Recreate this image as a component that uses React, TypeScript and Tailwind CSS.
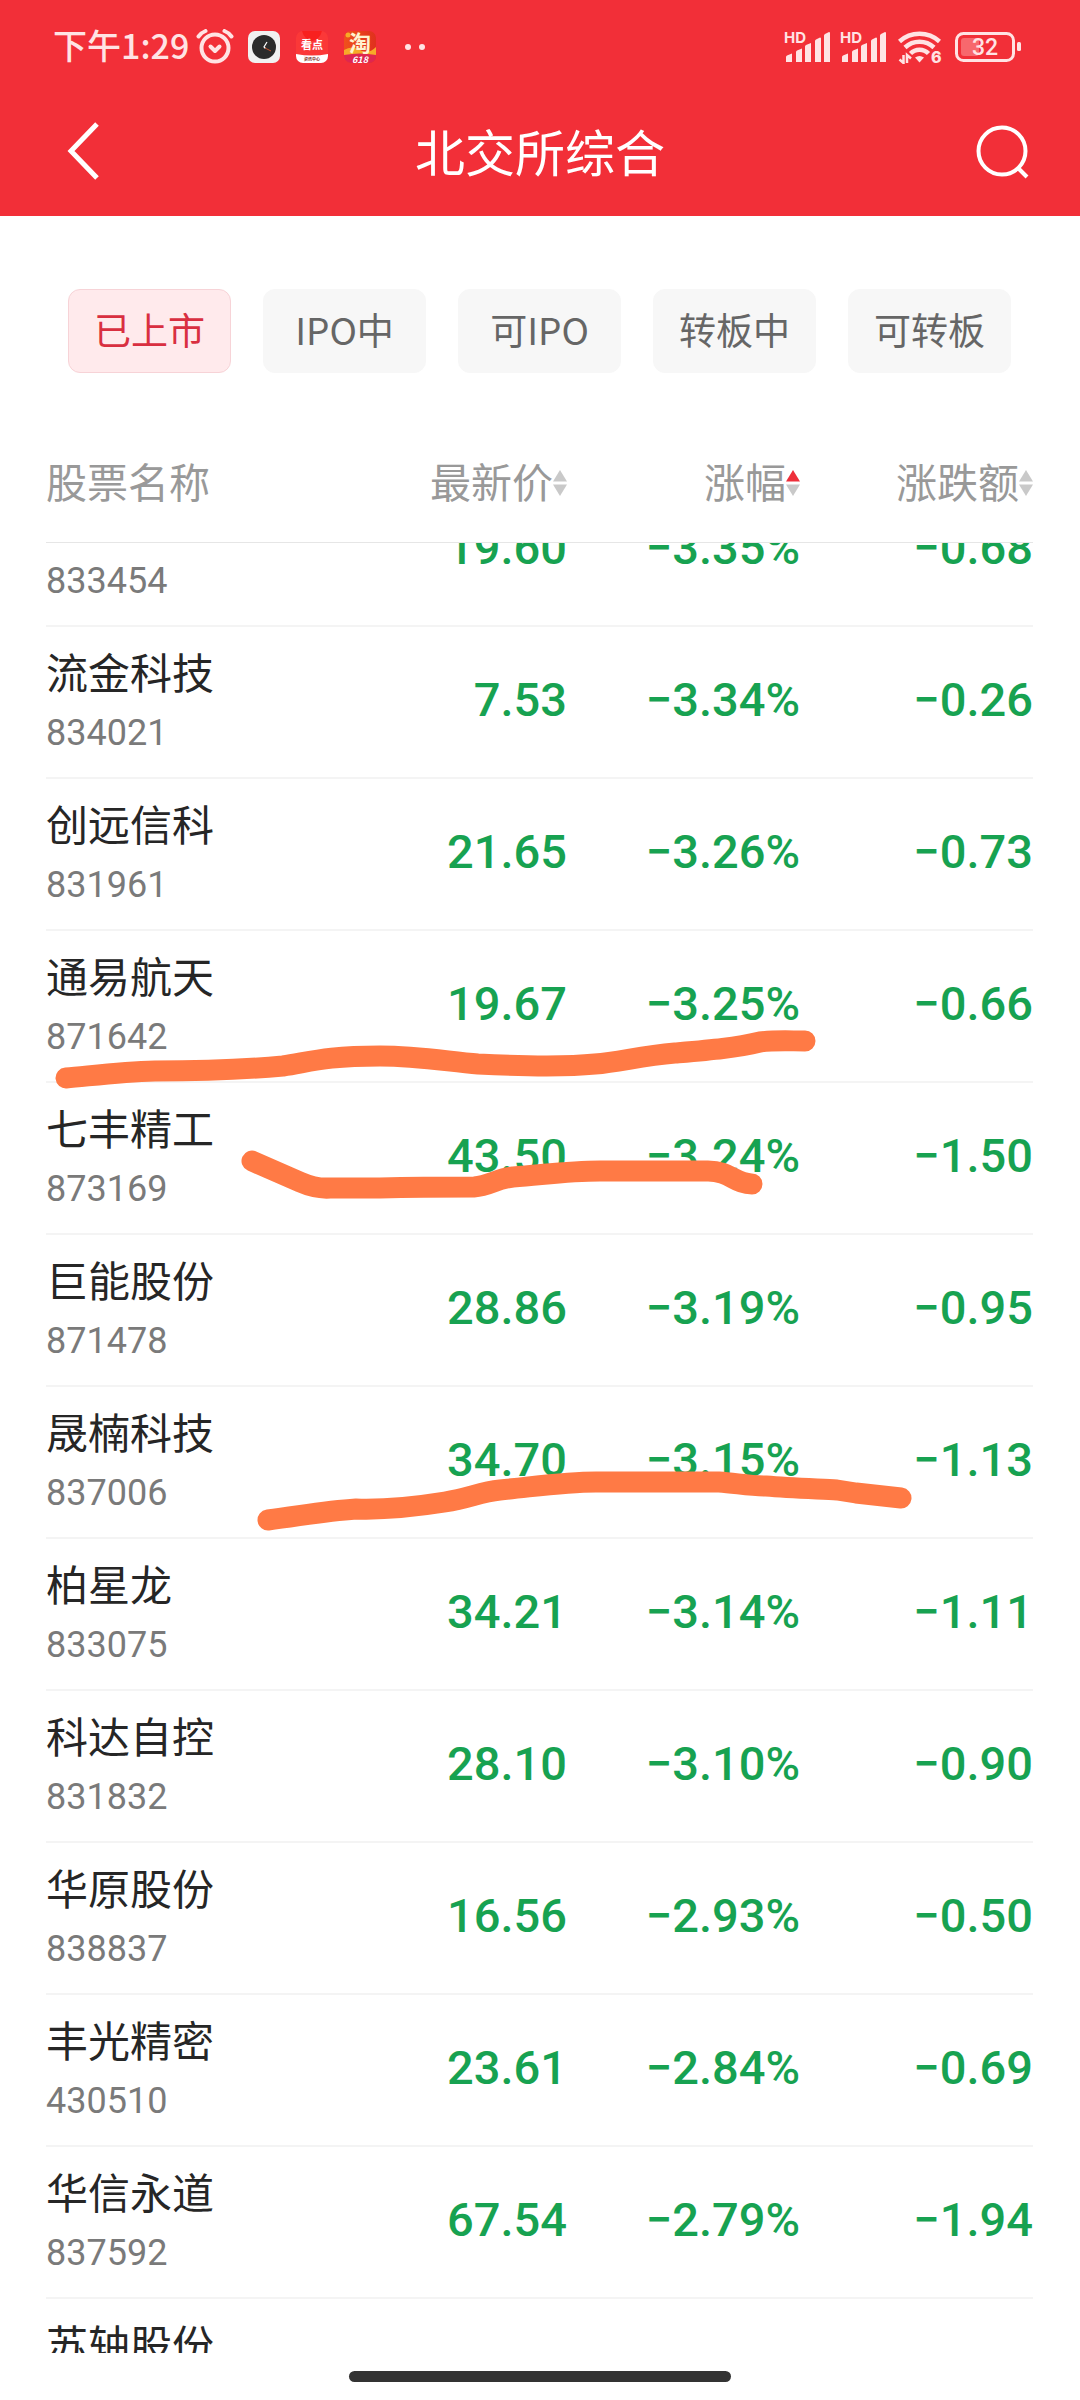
import React, { useLayoutEffect, useRef, useState } from "react";
import clsx from "clsx";

type Stock = {
  name: string;
  code: string;
  price: string;
  percent: string;
  change: string;
};

type SortKey = "price" | "percent" | "change";

const tabs = ["已上市", "IPO中", "可IPO", "转板中", "可转板"];

const columns: { key: SortKey; label: string }[] = [
  { key: "price", label: "最新价" },
  { key: "percent", label: "涨幅" },
  { key: "change", label: "涨跌额" },
];

const stocks: Stock[] = [
  { name: "同享科技", code: "833454", price: "19.60", percent: "−3.35%", change: "−0.68" },
  { name: "流金科技", code: "834021", price: "7.53", percent: "−3.34%", change: "−0.26" },
  { name: "创远信科", code: "831961", price: "21.65", percent: "−3.26%", change: "−0.73" },
  { name: "通易航天", code: "871642", price: "19.67", percent: "−3.25%", change: "−0.66" },
  { name: "七丰精工", code: "873169", price: "43.50", percent: "−3.24%", change: "−1.50" },
  { name: "巨能股份", code: "871478", price: "28.86", percent: "−3.19%", change: "−0.95" },
  { name: "晟楠科技", code: "837006", price: "34.70", percent: "−3.15%", change: "−1.13" },
  { name: "柏星龙", code: "833075", price: "34.21", percent: "−3.14%", change: "−1.11" },
  { name: "科达自控", code: "831832", price: "28.10", percent: "−3.10%", change: "−0.90" },
  { name: "华原股份", code: "838837", price: "16.56", percent: "−2.93%", change: "−0.50" },
  { name: "丰光精密", code: "430510", price: "23.61", percent: "−2.84%", change: "−0.69" },
  { name: "华信永道", code: "837592", price: "67.54", percent: "−2.79%", change: "−1.94" },
  { name: "苏轴股份", code: "430418", price: "21.10", percent: "−2.75%", change: "−0.59" },
];

function AlarmIcon() {
  return (
    <svg width="38" height="36" viewBox="0 0 38 36" fill="none" stroke="currentColor" strokeLinecap="round">
      <circle cx="19" cy="19" r="13.5" strokeWidth="4" />
      <path d="M14.500 17.500l4.500 4.500 4.500-4.500" strokeWidth="4" strokeLinejoin="round" />
      <path d="M2.500 7.500q3-4 7-5.500M35.500 7.500q-3-4-7-5.500" strokeWidth="4" />
    </svg>
  );
}

function ClockApp() {
  return (
    <svg width="32" height="32" viewBox="0 0 32 32">
      <rect width="32" height="32" rx="7" fill="#f1f1f1" />
      <circle cx="16" cy="16" r="12" fill="#2b2b2b" />
      <path d="M19 11l-3 5 1.500 1.500" fill="none" stroke="#fff" strokeWidth="1.200" />
      <path d="M17 17l6 3" stroke="#c1502e" strokeWidth="1" />
    </svg>
  );
}

function NewsApp() {
  return (
    <svg width="32" height="32" viewBox="0 0 32 32">
      <defs>
        <clipPath id="news">
          <rect width="32" height="32" rx="7" />
        </clipPath>
      </defs>
      <g clipPath="url(#news)">
        <rect width="32" height="32" fill="#fb3838" />
        <path d="M6 0q2 8 10 10Q24 8 26 0z" fill="#f8201f" />
        <path d="M0 23q16 3 32 0v9H0z" fill="#fff" />
        <text x="16" y="18" fontSize="11" fontWeight="700" fill="#fff" textAnchor="middle">看点</text>
        <text x="16" y="29.5" fontSize="4" fontWeight="700" fill="#7d2a22" textAnchor="middle">资讯中心</text>
      </g>
    </svg>
  );
}

function TaoApp() {
  return (
    <svg width="32" height="32" viewBox="0 0 32 32">
      <defs>
        <clipPath id="tao">
          <rect width="32" height="32" rx="7" />
        </clipPath>
        <linearGradient id="taoBg" x1="0" y1="0" x2="1" y2="0">
          <stop offset="0" stopColor="#f0501c" />
          <stop offset="1" stopColor="#e0301e" />
        </linearGradient>
      </defs>
      <g clipPath="url(#tao)">
        <rect width="32" height="32" fill="url(#taoBg)" />
        <path d="M0 19q8-5 16 0t16-3v8H0z" fill="#f7a928" />
        <path d="M0 24q16-3 32 0v8H0z" fill="#e0264f" />
        <circle cx="4" cy="4" r="2.5" fill="#f7a928" />
        <text x="16" y="20" fontSize="22" fontWeight="700" fill="#fff3d0" textAnchor="middle">淘</text>
        <text x="16" y="31.5" fontSize="9" fontWeight="700" fontStyle="italic" fill="#fff" textAnchor="middle">618</text>
      </g>
    </svg>
  );
}

function SignalIcon() {
  return (
    <svg width="46" height="32" viewBox="0 0 46 32" fill="currentColor" overflow="visible">
      <text x="0" y="12" fontSize="15" fontWeight="700" className="font-[Inter]">HD</text>
      <path d="M2 26q0-1 1-1.500l5-2V31H2zM12 21q0-1 1-1.500l5-2V31h-6zM21 15.500q0-1 1-1.500l5-2V31h-6zM31 10q0-1 1-1.500l4-2q1 0 1 1V31h-6zM40 4.500q0-1 1-1.500l4-2q1 0 1 1V31h-6z" />
    </svg>
  );
}

function WifiIcon() {
  return (
    <svg width="44" height="34" viewBox="0 0 44 34" fill="none" stroke="currentColor" strokeWidth="4.5">
      <path d="M1.500 11.500a30 30 0 0 1 40 0M7 17.500a21 21 0 0 1 29 0M12.500 23.500a12.500 12.500 0 0 1 18 0" />
      <path d="M17 27.500q4.500-3 9 0l-4.500 5z" fill="currentColor" stroke="none" />
      <path d="M5.500 25v8l-4-3.500M9 33v-8l4 3.500" strokeWidth="2.500" />
      <text x="33" y="33" fontSize="16" fontWeight="800" fill="currentColor" stroke="none" className="font-[Inter]">6</text>
    </svg>
  );
}

function BatteryIcon() {
  return (
    <svg width="66" height="30" viewBox="0 0 66 30">
      <rect x="1.500" y="1.500" width="57" height="27" rx="7" fill="none" stroke="currentColor" strokeWidth="3" />
      <rect x="6" y="6" width="18" height="18" rx="3" fill="#f7686d" />
      <rect x="62" y="10" width="4" height="9" rx="1.500" fill="currentColor" />
      <text x="30" y="23" fontSize="23" fontWeight="500" fill="currentColor" textAnchor="middle" className="font-[Roboto]">32</text>
    </svg>
  );
}

function StatusBar() {
  return (
    <div className="flex h-[94px] items-center justify-between pl-[53px] pr-[59px] text-[#ffe3e4]">
      <div className="flex items-center">
        <span className="pb-1 text-[34px] font-medium leading-none">下午1:29</span>
        <span className="ml-[7px]"><AlarmIcon /></span>
        <div className="ml-[14px] flex gap-4">
          <ClockApp />
          <NewsApp />
          <TaoApp />
        </div>
        <div className="ml-[29px] flex gap-2">
          <i className="size-[6px] rounded-full bg-[#ffe3e4]" />
          <i className="size-[6px] rounded-full bg-[#ffe3e4]" />
        </div>
      </div>
      <div className="flex items-center">
        <SignalIcon />
        <span className="ml-[10px]"><SignalIcon /></span>
        <span className="ml-3"><WifiIcon /></span>
        <span className="ml-[13px]"><BatteryIcon /></span>
      </div>
    </div>
  );
}

function TitleBar() {
  return (
    <div className="flex h-[122px] items-start justify-between px-[50px] pt-5">
      <button type="button" aria-label="返回" className="flex h-[76px] w-16 items-center pb-[3px] pl-[17px]">
        <svg width="32" height="58" viewBox="0 0 32 58" fill="none" stroke="#fff" strokeWidth="5">
          <path d="M30 2L4 29l26 27" />
        </svg>
      </button>
      <h1 className="text-[50px] leading-[72px] text-white">北交所综合</h1>
      <button type="button" aria-label="搜索" className="flex h-[76px] w-16 items-center justify-end">
        <svg width="54" height="56" viewBox="0 0 54 56" fill="none" stroke="#fff" strokeWidth="4">
          <circle cx="26" cy="27" r="23.500" />
          <path d="M42 44l9 9" />
        </svg>
      </button>
    </div>
  );
}

function SortArrows({ active }: { active?: boolean }) {
  return (
    <svg width="14" height="26" viewBox="0 0 14 26" className="mt-[3px]">
      <path d="M7 0l7 11.500H0z" fill={active ? "#ee2f3a" : "#c9c9c9"} />
      <path d="M7 26L0 14.500h14z" fill="#c9c9c9" />
    </svg>
  );
}

function StockTable() {
  const [sort, setSort] = useState<SortKey>("percent");
  const box = useRef<HTMLDivElement>(null);

  useLayoutEffect(() => {
    if (box.current) box.current.scrollTop = 68;
  }, []);

  return (
    <div ref={box} className="min-h-0 flex-1 overflow-y-auto pl-[46px] pr-[47px] [scrollbar-width:none]">
      <table className="w-full table-fixed border-separate border-spacing-0">
        <thead className="sticky top-0 bg-white text-[41px] text-[#999999]">
          <tr>
            <th className="h-[120px] border-b border-[#e6e6e6] p-0 pb-[3px] text-left font-normal">股票名称</th>
            {columns.map(({ key, label }) => (
              <th key={key} className="w-[233px] border-b border-[#e6e6e6] p-0 pb-[3px] font-normal">
                <button
                  type="button"
                  onClick={() => setSort(key)}
                  className="flex w-full items-center justify-end"
                >
                  {label}
                  <SortArrows active={sort === key} />
                </button>
              </th>
            ))}
          </tr>
        </thead>
        <tbody>
          {stocks.map((stock) => (
            <tr key={stock.code}>
              <td className="h-[152px] border-b-2 border-[#f4f4f4] p-0">
                <p className="text-[42px] leading-[62px] text-[#262626]">{stock.name}</p>
                <p className="font-[Roboto] text-[36px] leading-[62px] text-[#7a7a7a]">{stock.code}</p>
              </td>
              {columns.map(({ key }) => (
                <td
                  key={key}
                  className="border-b-2 border-[#f4f4f4] p-0 pb-1 text-right font-[Roboto] text-[47px] font-medium text-[#17a251]"
                >
                  {stock[key]}
                </td>
              ))}
            </tr>
          ))}
        </tbody>
      </table>
    </div>
  );
}

// Marker strokes drawn over the list
function Scribbles() {
  return (
    <svg
      className="pointer-events-none absolute inset-0 h-full w-full"
      viewBox="0 0 1080 2400"
      fill="none"
      stroke="#ff7a45"
      strokeWidth="21"
      strokeLinecap="round"
      strokeLinejoin="round"
    >
      <path d="M66 1078C90 1076 120 1072 155 1071C200 1071 250 1069 283 1066C310 1062 325 1056 380 1056C420 1056 450 1062 478 1064C520 1066 565 1067 595 1064C620 1062 640 1056 675 1053C710 1050 735 1048 760 1042C775 1040 790 1041 805 1041" />
      <path d="M252 1161L300 1182Q316 1189 330 1188L380 1188C420 1187 450 1187 474 1187C490 1186 495 1179 513 1177C550 1174 570 1171 600 1171L708 1171C730 1171 735 1184 752 1184" />
      <path d="M268 1520C300 1516 325 1511 356 1509C385 1510 420 1506 445 1502C470 1498 480 1492 500 1490C540 1486 565 1482 596 1482L719 1482C735 1483 750 1486 766 1486C790 1488 820 1489 837 1490L856 1493L901 1498" />
    </svg>
  );
}

export default function App() {
  const [tab, setTab] = useState(tabs[0]);

  return (
    <div className="relative flex h-screen flex-col overflow-hidden bg-white font-['Noto_Sans_CJK_SC',sans-serif]">
      <header className="bg-[#f22f38]">
        <StatusBar />
        <TitleBar />
      </header>
      <nav className="flex gap-8 pb-[50px] pl-[68px] pr-[69px] pt-[73px]">
        {tabs.map((label) => (
          <button
            key={label}
            type="button"
            onClick={() => setTab(label)}
            className={clsx(
              "h-[84px] flex-1 rounded-xl border pb-[3px] text-[37px]",
              tab === label
                ? "border-[#f7d3d7] bg-[#ffeaec] text-[#d92f40]"
                : "border-[#f7f7f7] bg-[#f7f7f7] text-[#666666]"
            )}
          >
            {label}
          </button>
        ))}
      </nav>
      <StockTable />
      <footer className="flex h-[47px] justify-center pt-[18px]">
        <i className="h-[11px] w-[382px] rounded-full bg-[#333333]" />
      </footer>
      <Scribbles />
    </div>
  );
}
